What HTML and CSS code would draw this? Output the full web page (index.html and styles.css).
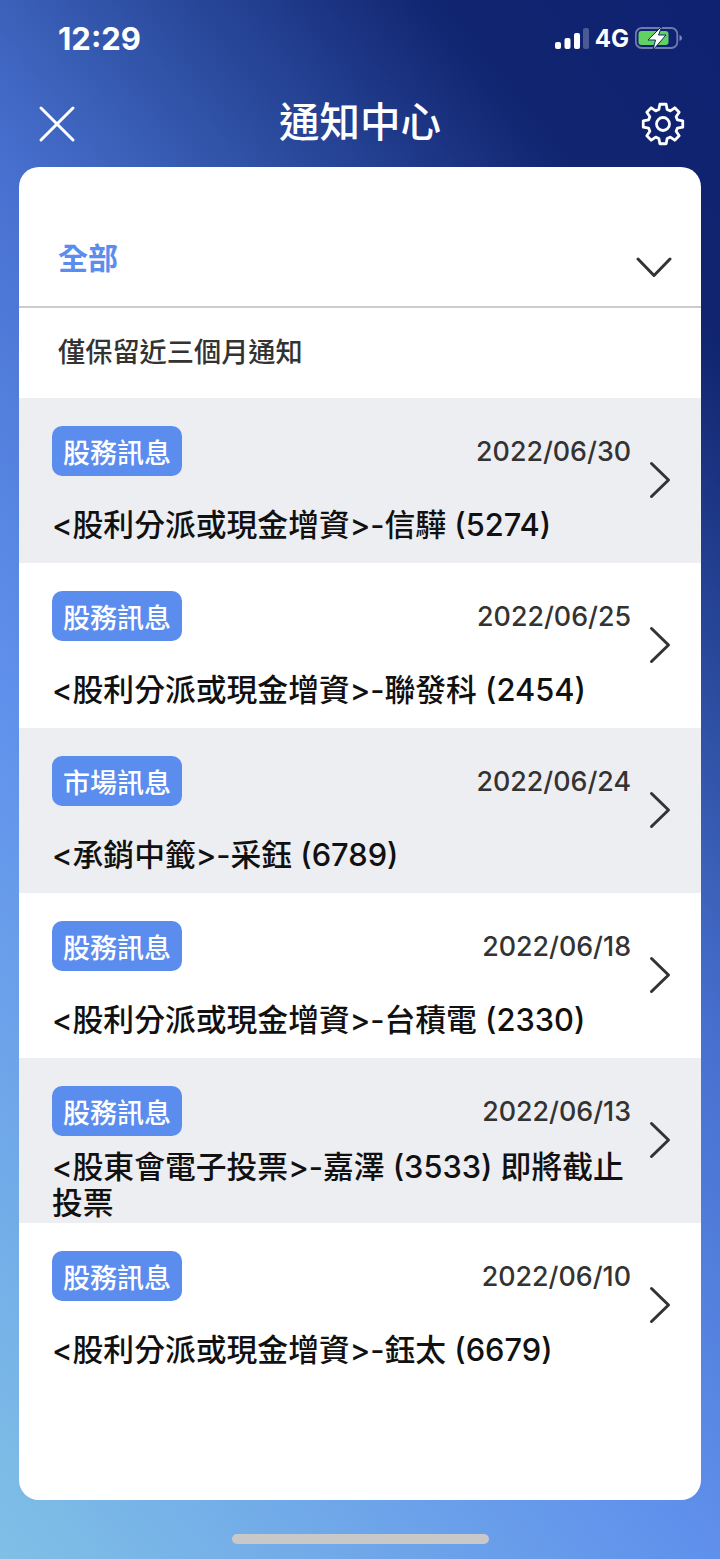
FILE: index.html
```html
<!DOCTYPE html>
<html lang="zh-Hant">
<head>
  <meta charset="UTF-8" />
  <meta name="viewport" content="width=device-width, initial-scale=1.0"/>
  <title>通知中心</title>
  <link rel="stylesheet" href="styles.css">
</head>
<body>
  <div class="status-bar">
    <span class="clock">12:29</span>
    <div class="status-icons">
      <svg class="signal" width="34" height="21" viewBox="0 0 34 21">
        <rect x="0" y="14" width="6" height="7" rx="2" fill="#fff"/>
        <rect x="9.500" y="10" width="6" height="11" rx="2" fill="#fff"/>
        <rect x="19" y="5" width="6" height="16" rx="2" fill="#fff"/>
        <rect x="28" y="0" width="6" height="21" rx="2" fill="#fff" opacity="0.25"/>
      </svg>
      <span class="network">4G</span>
      <svg class="battery" width="48" height="26" viewBox="0 0 48 26">
        <rect x="0.800" y="3" width="41.500" height="20" rx="6" fill="none" stroke="#fff" stroke-opacity="0.4" stroke-width="1.800"/>
        <rect x="3.500" y="6" width="30" height="14" rx="3" fill="#62d163"/>
        <path d="M44.500 10c1.500.5 2.500 1.500 2.500 3s-1 2.500-2.500 3z" fill="#fff" fill-opacity="0.45"/>
        <path d="M27 1 13 15h7.500L18 25l13-15h-7.500z" fill="#fff" stroke="#10246f" stroke-width="1"/>
      </svg>
    </div>
  </div>

  <header class="nav">
    <svg class="nav-icon" width="44" height="44" viewBox="0 0 44 44">
      <path d="M6 6 38 38M38 6 6 38" stroke="#fff" stroke-width="3" stroke-linecap="round" fill="none"/>
    </svg>
    <h1>通知中心</h1>
    <svg class="nav-icon" width="44" height="44" viewBox="0 0 44 44" fill="none" stroke="#fff" stroke-width="2.800" stroke-linejoin="round">
      <polygon points="17.87,7.58 18.87,2.25 25.13,2.25 26.13,7.58 29.27,8.88 33.76,5.82 38.18,10.24 35.12,14.73 36.42,17.87 41.75,18.87 41.75,25.13 36.42,26.13 35.12,29.27 38.18,33.76 33.76,38.18 29.27,35.12 26.13,36.42 25.13,41.75 18.87,41.75 17.87,36.42 14.73,35.12 10.24,38.18 5.82,33.76 8.88,29.27 7.58,26.13 2.25,25.13 2.25,18.87 7.58,17.87 8.88,14.73 5.82,10.24 10.24,5.82 14.73,8.88"/>
      <circle cx="22" cy="22" r="6.500"/>
    </svg>
  </header>

  <main class="card">
    <div class="filter">
      <span class="filter-label">全部</span>
      <svg width="36" height="21" viewBox="0 0 36 21">
        <path d="M2 2 18 18.500 34 2" stroke="#333" stroke-width="3" stroke-linecap="round" stroke-linejoin="round" fill="none"/>
      </svg>
    </div>
    <p class="note">僅保留近三個月通知</p>

    <div class="notice shaded">
      <div class="notice-body">
        <div class="notice-head"><span class="tag">股務訊息</span><span class="date">2022/06/30</span></div>
        <div class="notice-title"><span>&lt;股利分派或現金增資&gt;-信驊 (5274)</span></div>
      </div>
      <svg class="chevron" width="22" height="38" viewBox="0 0 22 38"><path d="M2.500 2.500 19.500 19 2.500 35.500"/></svg>
    </div>

    <div class="notice">
      <div class="notice-body">
        <div class="notice-head"><span class="tag">股務訊息</span><span class="date">2022/06/25</span></div>
        <div class="notice-title"><span>&lt;股利分派或現金增資&gt;-聯發科 (2454)</span></div>
      </div>
      <svg class="chevron" width="22" height="38" viewBox="0 0 22 38"><path d="M2.500 2.500 19.500 19 2.500 35.500"/></svg>
    </div>

    <div class="notice shaded">
      <div class="notice-body">
        <div class="notice-head"><span class="tag">市場訊息</span><span class="date">2022/06/24</span></div>
        <div class="notice-title"><span>&lt;承銷中籤&gt;-采鈺 (6789)</span></div>
      </div>
      <svg class="chevron" width="22" height="38" viewBox="0 0 22 38"><path d="M2.500 2.500 19.500 19 2.500 35.500"/></svg>
    </div>

    <div class="notice">
      <div class="notice-body">
        <div class="notice-head"><span class="tag">股務訊息</span><span class="date">2022/06/18</span></div>
        <div class="notice-title"><span>&lt;股利分派或現金增資&gt;-台積電 (2330)</span></div>
      </div>
      <svg class="chevron" width="22" height="38" viewBox="0 0 22 38"><path d="M2.500 2.500 19.500 19 2.500 35.500"/></svg>
    </div>

    <div class="notice shaded">
      <div class="notice-body">
        <div class="notice-head"><span class="tag">股務訊息</span><span class="date">2022/06/13</span></div>
        <div class="notice-title"><span>&lt;股東會電子投票&gt;-嘉澤 (3533) 即將截止投票</span></div>
      </div>
      <svg class="chevron" width="22" height="38" viewBox="0 0 22 38"><path d="M2.500 2.500 19.500 19 2.500 35.500"/></svg>
    </div>

    <div class="notice">
      <div class="notice-body">
        <div class="notice-head"><span class="tag">股務訊息</span><span class="date">2022/06/10</span></div>
        <div class="notice-title"><span>&lt;股利分派或現金增資&gt;-鈺太 (6679)</span></div>
      </div>
      <svg class="chevron" width="22" height="38" viewBox="0 0 22 38"><path d="M2.500 2.500 19.500 19 2.500 35.500"/></svg>
    </div>
  </main>

  <div class="home-bar"><span></span></div>
</body>
</html>
```

FILE: styles.css
```css
* {
  box-sizing: border-box;
}
html, body {
  height: 100%;
}
body {
  margin: 0;
  height: 1559px;
  overflow: hidden;
  display: flex;
  flex-direction: column;
  font-family: Inter, "Noto Sans CJK TC", sans-serif;
  background: linear-gradient(231deg, #0f2272 0%, #10246f 14%, #3a60b8 36%, #4870d0 43%, #5f90ec 64%, #80c0e6 100%);
  color: #fff;
}
.status-bar {
  height: 76px;
  padding: 0 37px 0 58px;
  display: flex;
  align-items: center;
  justify-content: space-between;
}
.clock {
  font-size: 31px;
  font-weight: 700;
}
.status-icons {
  display: flex;
  align-items: center;
  gap: 6px;
}
.network {
  font-size: 24px;
  font-weight: 700;
}
.nav {
  height: 91px;
  padding: 4px 35px 0 35px;
  display: flex;
  align-items: center;
  justify-content: space-between;
}
.nav h1 {
  margin: 0;
  font-size: 40.500px;
  font-weight: 500;
  line-height: 1;
}
.card {
  flex: none;
  height: 1333px;
  margin: 0 19px;
  background-color: #fff;
  border-radius: 20px;
  overflow: hidden;
}
.filter {
  height: 141px;
  padding: 70px 29px 0 39px;
  border-bottom: 2px solid #ccc;
  display: flex;
  justify-content: space-between;
}
.filter-label {
  font-size: 30px;
  line-height: 42px;
  font-weight: 700;
  color: #5b8def;
}
.filter svg {
  margin-top: 20px;
}
.note {
  margin: 0;
  height: 90px;
  padding: 0 39px 6px;
  display: flex;
  align-items: center;
  font-size: 27.200px;
  font-weight: 500;
  color: #333;
}
.notice {
  height: 165px;
  padding: 28px 30px 0 33px;
  display: flex;
  align-items: flex-start;
  overflow: hidden;
}
.shaded {
  background-color: #edeef2;
}
.notice-body {
  flex: 1;
  min-width: 0;
  height: 137px;
  display: flex;
  flex-direction: column;
}
.notice-head {
  display: flex;
  align-items: center;
  justify-content: space-between;
  padding-bottom: 2px;
}
.tag {
  width: 130px;
  height: 50px;
  border-radius: 10px;
  background-color: #5b8def;
  color: #fff;
  font-size: 27px;
  font-weight: 500;
  display: flex;
  align-items: center;
  justify-content: center;
}
.date {
  font-size: 26.800px;
  font-weight: 500;
  color: #333;
}
.notice-title {
  flex: 1;
  padding-top: 8px;
  display: flex;
  align-items: center;
  font-size: 30.800px;
  line-height: 36px;
  font-weight: 500;
  color: #111;
}
.chevron {
  flex: none;
  margin: 35px 0 0 18px;
}
.chevron path {
  fill: none;
  stroke: #333;
  stroke-width: 3;
  stroke-linecap: round;
  stroke-linejoin: round;
}
.home-bar {
  flex: 1;
  display: flex;
  justify-content: center;
  padding-top: 34px;
}
.home-bar span {
  width: 257px;
  height: 10px;
  border-radius: 5px;
  background-color: #c8c8c8;
}
```
